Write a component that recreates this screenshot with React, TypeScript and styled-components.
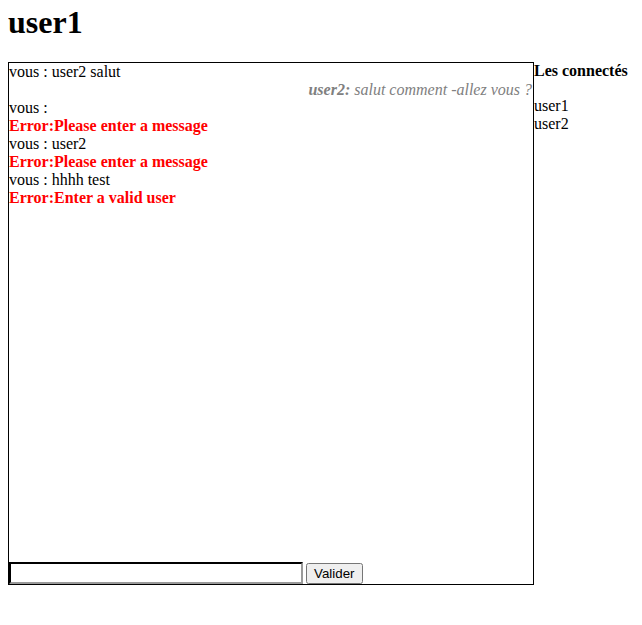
import React from "react";
import styled, { createGlobalStyle } from "styled-components";

const Global = createGlobalStyle`
  body {
    margin: 8px;
    font-family: "Liberation Serif", "Times New Roman", serif;
    font-size: 16px;
    color: #000;
    background: #fff;
  }
`;

const Title = styled.h1`
  font-size: 32px;
  font-weight: bold;
  margin: -4px 0 21px;
  line-height: 37px;
`;

const Layout = styled.div`
  display: flex;
  align-items: flex-start;
`;

const ChatBox = styled.div`
  width: 524px;
  height: 521px;
  border: 1px solid #000;
  display: flex;
  flex-direction: column;
`;

const Messages = styled.div`
  flex: 1;
  line-height: 18px;
`;

const Line = styled.div<{ $kind?: "error" | "incoming" }>`
  color: ${(p) => (p.$kind === "error" ? "#ff0000" : p.$kind === "incoming" ? "#808080" : "#000")};
  font-weight: ${(p) => (p.$kind === "error" ? "bold" : "normal")};
  font-style: ${(p) => (p.$kind === "incoming" ? "italic" : "normal")};
  text-align: ${(p) => (p.$kind === "incoming" ? "right" : "left")};
  padding-right: ${(p) => (p.$kind === "incoming" ? "1px" : "0")};
`;

const Form = styled.form`
  display: flex;
  align-items: flex-end;
  gap: 3px;
  margin: 0;
`;

const TextInput = styled.input`
  width: 294px;
  height: 22px;
  box-sizing: border-box;
  font-family: "Liberation Sans", Arial, sans-serif;
  font-size: 13.33px;
  padding: 1px 2px;
  margin: 0;
  border: 2px inset #767676;
  border-top-color: #545454;
  border-left-color: #545454;
  border-bottom-color: #9a9a9a;
  border-right-color: #9a9a9a;
  outline: none;
`;

const Button = styled.button`
  font-family: "Liberation Sans", Arial, sans-serif;
  font-size: 13.33px;
  height: 21px;
  padding: 1px 6px;
  margin: 0;
`;

const Sidebar = styled.div`
  line-height: 18px;
`;

const SideTitle = styled.div`
  font-weight: bold;
  margin-top: 0px;
  margin-bottom: 17px;
`;

const User = styled.div``;

export default function App() {
  return (
    <>
      <Global />
      <Title>user1</Title>
      <Layout>
        <ChatBox>
          <Messages>
            <Line>vous : user2 salut</Line>
            <Line $kind="incoming">
              <b>user2:</b> salut comment -allez vous ?
            </Line>
            <Line>vous :</Line>
            <Line $kind="error">Error:Please enter a message</Line>
            <Line>vous : user2</Line>
            <Line $kind="error">Error:Please enter a message</Line>
            <Line>vous : hhhh test</Line>
            <Line $kind="error">Error:Enter a valid user</Line>
          </Messages>
          <Form onSubmit={(e) => e.preventDefault()}>
            <TextInput type="text" autoFocus />
            <Button type="submit">Valider</Button>
          </Form>
        </ChatBox>
        <Sidebar>
          <SideTitle>Les connectés</SideTitle>
          <User>user1</User>
          <User>user2</User>
        </Sidebar>
      </Layout>
    </>
  );
}
